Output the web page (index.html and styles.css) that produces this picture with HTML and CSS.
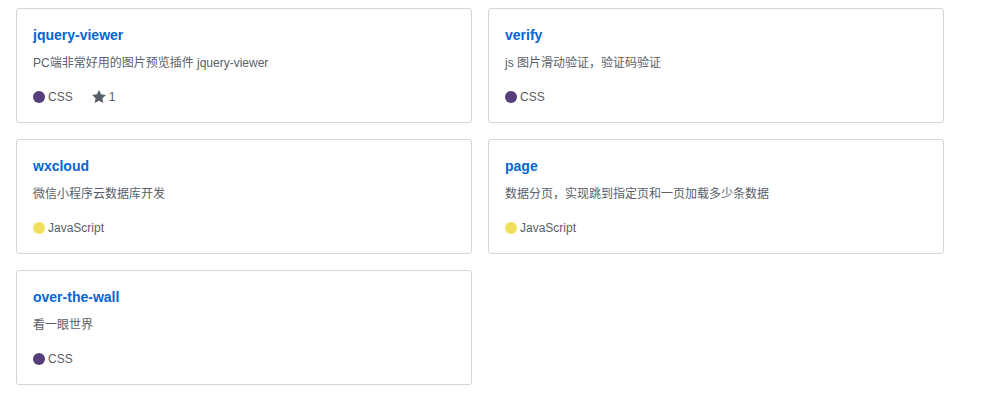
FILE: index.html
```html
<!DOCTYPE html>
<html lang="zh">
<head>
<meta charset="utf-8">
<title>Pinned repositories</title>
<link rel="stylesheet" href="styles.css">
</head>
<body>
<ol class="pinned">
  <li class="card">
    <a class="repo" href="#">jquery-viewer</a>
    <p class="desc">PC端非常好用的图片预览插件 jquery-viewer</p>
    <p class="meta">
      <span class="lang"><span class="dot css"></span>CSS</span>
      <span class="stars"><svg class="star" viewBox="0 0 14 16" width="14" height="16"><path fill-rule="evenodd" d="M14 6l-4.9-.64L7 1 4.9 5.36 0 6l3.6 3.26L2.67 14 7 11.67 11.33 14l-.93-4.74L14 6z"/></svg>1</span>
    </p>
  </li>
  <li class="card">
    <a class="repo" href="#">verify</a>
    <p class="desc">js 图片滑动验证，验证码验证</p>
    <p class="meta">
      <span class="lang"><span class="dot css"></span>CSS</span>
    </p>
  </li>
  <li class="card">
    <a class="repo" href="#">wxcloud</a>
    <p class="desc">微信小程序云数据库开发</p>
    <p class="meta">
      <span class="lang"><span class="dot js"></span>JavaScript</span>
    </p>
  </li>
  <li class="card">
    <a class="repo" href="#">page</a>
    <p class="desc">数据分页，实现跳到指定页和一页加载多少条数据</p>
    <p class="meta">
      <span class="lang"><span class="dot js"></span>JavaScript</span>
    </p>
  </li>
  <li class="card">
    <a class="repo" href="#">over-the-wall</a>
    <p class="desc">看一眼世界</p>
    <p class="meta">
      <span class="lang"><span class="dot css"></span>CSS</span>
    </p>
  </li>
</ol>
</body>
</html>
```

FILE: styles.css
```css
html, body {
  margin: 0;
  padding: 0;
  background: #fff;
}
body {
  font-family: "Liberation Sans", Arial, "Noto Sans CJK SC", sans-serif;
  color: #24292e;
  font-size: 14px;
  line-height: 1.5;
}
.pinned {
  list-style: none;
  margin: 0;
  padding: 8px 0 0 16px;
  display: grid;
  grid-template-columns: 456px 456px;
  column-gap: 16px;
  row-gap: 16px;
}
.card {
  box-sizing: border-box;
  height: 115px;
  border: 1px solid #d1d5da;
  border-radius: 3px;
  padding: 16px;
  display: flex;
  flex-direction: column;
}
.repo {
  font-size: 14px;
  font-weight: bold;
  line-height: 21px;
  color: #0366d6;
  text-decoration: none;
  align-self: flex-start;
}
.desc {
  margin: 8px 0 16px;
  font-size: 12px;
  line-height: 18px;
  color: #586069;
}
.meta {
  margin: 0;
  font-size: 12px;
  line-height: 18px;
  color: #586069;
  display: flex;
  align-items: center;
}
.lang {
  display: inline-flex;
  align-items: center;
  margin-right: 19px;
}
.dot {
  width: 12px;
  height: 12px;
  border-radius: 50%;
  margin-right: 3px;
  display: inline-block;
}
.dot.css { background: #563d7c; }
.dot.js { background: #f1e05a; }
.stars {
  display: inline-flex;
  align-items: center;
}
.star {
  fill: #586069;
  margin-right: 3px;
}
```
